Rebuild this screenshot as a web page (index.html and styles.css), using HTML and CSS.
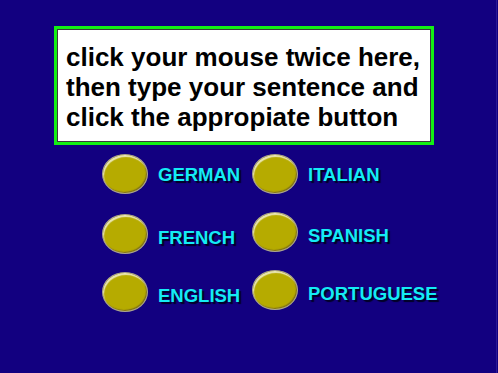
FILE: index.html
```html
<!DOCTYPE html>
<html>
<head>
<meta charset="utf-8">
<link rel="stylesheet" href="styles.css">
</head>
<body>
<div class="page">
  <div class="prompt">
    <div class="prompt-inner">click your mouse twice here,<br>then type your sentence and<br>click the appropiate button</div>
  </div>
  <div class="choices">
    <div class="option"><span class="oval"></span><span class="label">GERMAN</span></div>
    <div class="option"><span class="oval"></span><span class="label">ITALIAN</span></div>
    <div class="option option-low"><span class="oval"></span><span class="label label-low">FRENCH</span></div>
    <div class="option"><span class="oval"></span><span class="label label-low">SPANISH</span></div>
    <div class="option option-low"><span class="oval"></span><span class="label label-low">ENGLISH</span></div>
    <div class="option"><span class="oval"></span><span class="label label-low">PORTUGUESE</span></div>
  </div>
</div>
</body>
</html>
```

FILE: styles.css
```css
html, body {
  margin: 0;
  padding: 0;
  background: #120080;
}
.page {
  width: 497px;
  height: 373px;
  box-sizing: border-box;
  border-right: 1px solid #2a1a96;
  padding: 26px 0 0 54px;
  font-family: "Liberation Sans", Arial, sans-serif;
}
.prompt {
  width: 380px;
  height: 119px;
  box-sizing: border-box;
  border: 3px solid #14f014;
}
.prompt-inner {
  height: 100%;
  box-sizing: border-box;
  background: #ffffff;
  border: 1px solid #3a3a3a;
  padding: 12px 0 0 8px;
  font-weight: bold;
  font-size: 26px;
  line-height: 30px;
  color: #000;
  white-space: nowrap;
}
.choices {
  margin: 9px 0 0 48px;
  display: grid;
  grid-template-columns: 150px 190px;
  grid-template-rows: 40px 40px 40px;
  row-gap: 18px;
}
.option {
  display: flex;
  align-items: center;
}
.option-low {
  transform: translateY(2px);
}
.oval {
  width: 46px;
  height: 40px;
  box-sizing: border-box;
  border-radius: 50%;
  background: #b6ab00;
  border: 1px solid #a9a390;
  box-shadow: inset 1px 2px 1px rgba(255,255,255,0.7), inset -1px -1px 1px rgba(40,20,60,0.4);
  flex: none;
}
.label {
  margin-left: 10px;
  font-weight: bold;
  font-size: 18.5px;
  color: #14ecf4;
  text-shadow: 2px 2px 1px #020024;
  position: relative;
  top: 1px;
}
.label-low {
  top: 4px;
}
```
